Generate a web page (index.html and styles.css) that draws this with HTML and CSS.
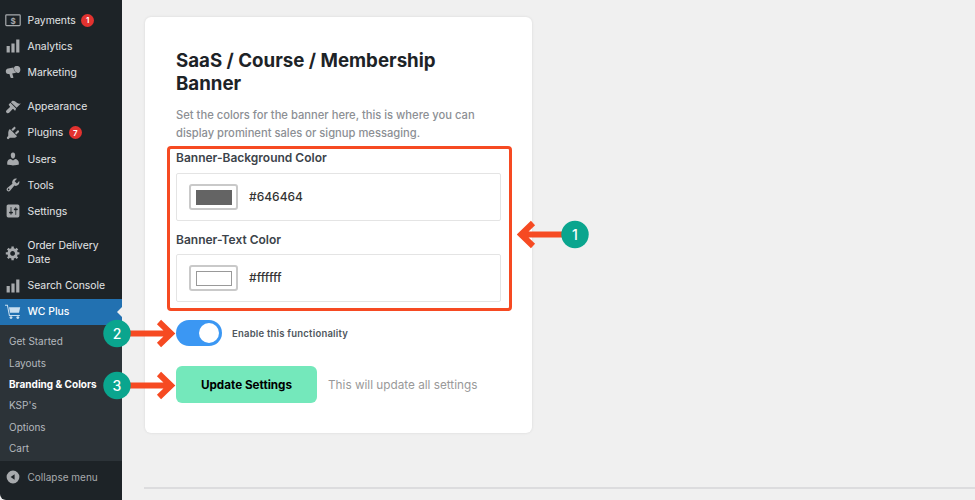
FILE: index.html
```html
<!DOCTYPE html>
<html lang="en">
<head>
<meta charset="utf-8">
<title>Branding &amp; Colors</title>
<link rel="stylesheet" href="styles.css">
</head>
<body>
<div class="app">
  <nav class="sidebar">
    <ul class="menu">
      <li class="item"><svg class="icon" viewBox="0 0 20 20"><rect x="1" y="3.500" width="18" height="13.500" rx="1" class="outline"/><text x="10" y="14.500" class="dollar">$</text></svg><span>Payments</span><b class="badge">1</b></li>
      <li class="item"><svg class="icon" viewBox="0 0 20 20"><path d="M18 18V2h-4v16h4zm-6 0V7H8v11h4zm-6 0v-8H2v8h4z"/></svg><span>Analytics</span></li>
      <li class="item"><svg class="icon" viewBox="0 0 20 20"><path d="M17.500 3c1 .7 1.700 2.300 1.700 4.200S18.300 10.800 17 11.200c-1 .3-2-.1-3-.9-1.300-1-2.300-2.600-2.600-4.200-.3-1.500.1-2.800 1.300-3.300 1-.5 3.300-.5 4.800.2zM10.500 4.500c.2 2.500 1.600 5 3.500 6.400l-5 1 1.500 4.800c.1.500-.2.800-.6.800H7.700c-.4 0-.7-.2-.8-.6L5.500 12.500H4C2 12.500 1 11 1 9s1-3.200 3-3.500z"/></svg><span>Marketing</span></li>
      <li class="item group"><svg class="icon" viewBox="0 0 20 20"><path d="M14.480 11.060L7.410 3.990l1.500-1.500c.5-.56 2.300-.47 3.510.32 1.210.8 1.430 1.280 2.910 2.100 1.180.64 2.450 1.260 4.450.85zm-.71.71L6.700 4.700 4.930 6.470c-.39.39-.39 1.020 0 1.410l1.060 1.060c.39.39.39 1.030 0 1.420L2 14c-1.500 1.500-.5 3 .5 3.500s2.200.2 3-.6l3.800-4c.39-.39 1.020-.39 1.410 0l1.060 1.060c.39.39 1.020.39 1.410 0z"/></svg><span>Appearance</span></li>
      <li class="item"><svg class="icon" viewBox="0 0 20 20"><path d="M13.110 4.360L9.870 7.600 8 5.730l3.240-3.240c.35-.34 1.050-.2 1.560.32.520.51.660 1.210.310 1.550zm-8 1.770l.91-1.120 9.010 9.010-1.190.84c-.71.71-2.630 1.160-3.820 1.160H6.140L4.900 17.260c-.59.59-1.540.59-2.120 0-.59-.58-.59-1.530 0-2.120l1.240-1.240v-3.880c0-1.130.4-3.190 1.090-3.890zm7.260 3.970l3.240-3.240c.34-.35 1.040-.21 1.550.31.520.51.660 1.210.310 1.550l-3.240 3.250z"/></svg><span>Plugins</span><b class="badge">7</b></li>
      <li class="item"><svg class="icon" viewBox="0 0 20 20"><path d="M10 9.250c-2.270 0-2.730-3.440-2.730-3.440C7 4.020 7.820 2 9.970 2c2.160 0 2.980 2.020 2.710 3.810 0 0-.41 3.440-2.680 3.440zm0 2.570L12.720 10c2.390 0 4.520 2.330 4.520 4.530v2.490s-3.650 1.130-7.240 1.130c-3.650 0-7.240-1.130-7.240-1.130v-2.490c0-2.250 1.940-4.480 4.470-4.480z"/></svg><span>Users</span></li>
      <li class="item"><svg class="icon" viewBox="0 0 20 20"><path d="M16.680 9.770c-1.340 1.340-3.300 1.670-4.950.99l-5.410 6.520c-.99.99-2.590.99-3.580 0s-.99-2.590 0-3.570l6.520-5.420c-.68-1.650-.35-3.610.99-4.950 1.280-1.280 3.120-1.620 4.720-1.060l-2.890 2.890 2.820 2.820 2.860-2.870c.53 1.580.18 3.390-1.080 4.650zM3.810 16.210c.4.39 1.040.39 1.430 0 .4-.4.4-1.040 0-1.430-.39-.4-1.030-.4-1.430 0-.39.39-.39 1.030 0 1.430z"/></svg><span>Tools</span></li>
      <li class="item"><svg class="icon" viewBox="0 0 20 20"><path d="M18 16V4c0-1.100-.9-2-2-2H4c-1.100 0-2 .9-2 2v12c0 1.100.9 2 2 2h12c1.100 0 2-.9 2-2zM8 11h1c.55 0 1 .45 1 1s-.45 1-1 1H8v1.500c0 .28-.22.5-.5.5s-.5-.22-.5-.5V13H6c-.55 0-1-.45-1-1s.45-1 1-1h1V5.500c0-.28.22-.5.5-.5s.5.22.5.5V11zm5-2h-1c-.55 0-1-.45-1-1s.45-1 1-1h1V5.500c0-.28.22-.5.5-.5s.5.22.5.5V7h1c.55 0 1 .45 1 1s-.45 1-1 1h-1v5.500c0 .28-.22.5-.5.5s-.5-.22-.5-.5V9z"/></svg><span>Settings</span></li>
      <li class="item group tall"><svg class="icon" viewBox="0 0 20 20"><path d="M18 12h-2.180c-.17.7-.44 1.350-.81 1.930l1.540 1.540-2.100 2.100-1.540-1.540c-.58.36-1.230.63-1.910.79V19H8v-2.180c-.68-.16-1.330-.43-1.910-.79l-1.540 1.540-2.120-2.120 1.540-1.540c-.36-.58-.63-1.230-.79-1.910H1V9.030h2.170c.16-.7.44-1.350.8-1.940L2.430 5.550l2.100-2.100 1.540 1.540c.58-.37 1.240-.64 1.930-.81V2h3v2.180c.68.16 1.330.43 1.910.79l1.540-1.540 2.120 2.120-1.540 1.540c.36.59.64 1.240.8 1.940H18V12zm-8.500 1.500c1.660 0 3-1.340 3-3s-1.340-3-3-3-3 1.340-3 3 1.340 3 3 3z"/></svg><span>Order Delivery Date</span></li>
      <li class="item"><svg class="icon" viewBox="0 0 20 20"><path d="M18 18V2h-4v16h4zm-6 0V7H8v11h4zm-6 0v-8H2v8h4z"/></svg><span>Search Console</span></li>
      <li class="item active"><svg class="icon cart" viewBox="0 0 20 20"><path d="M0 1.500h3l2.500 13h13" class="line"/><path d="M5 4h14l-1.500 7H6.300z"/><circle cx="7.500" cy="17" r="1.800"/><circle cx="16" cy="17" r="1.800"/></svg><span>WC Plus</span></li>
    </ul>
    <ul class="submenu">
      <li>Get Started</li>
      <li>Layouts</li>
      <li class="current">Branding &amp; Colors</li>
      <li>KSP's</li>
      <li>Options</li>
      <li>Cart</li>
    </ul>
    <div class="collapse"><svg class="icon" viewBox="0 0 20 20"><path d="M10 2a8 8 0 1 1 0 16 8 8 0 0 1 0-16zm2 4.500L7 10l5 3.500z"/></svg><span>Collapse menu</span></div>
  </nav>
  <main class="main">
    <section class="card">
      <h1 class="title">SaaS / Course / Membership Banner</h1>
      <p class="desc">Set the colors for the banner here, this is where you can display prominent sales or signup messaging.</p>
      <div class="fields">
        <label class="label">Banner-Background Color</label>
        <div class="field">
          <span class="swatch"><i class="chip chip-dark"></i></span>
          <span class="value">#646464</span>
        </div>
        <label class="label second">Banner-Text Color</label>
        <div class="field field-second">
          <span class="swatch"><i class="chip chip-light"></i></span>
          <span class="value">#ffffff</span>
        </div>
      </div>
      <div class="toggle-row">
        <span class="toggle"><i class="knob"></i></span>
        <span class="toggle-label">Enable this functionality</span>
      </div>
      <div class="action-row">
        <button class="btn" type="button">Update Settings</button>
        <span class="hint">This will update all settings</span>
      </div>
    </section>
    <hr class="rule">
  </main>
</div>

<div class="redbox"></div>
<svg class="arrow arrow-1" viewBox="0 0 75 40"><path d="M6 17.500H58M16 6L4 17.500 16 29" class="arrow-stroke"/><circle cx="58" cy="17.500" r="13.700" class="dot"/><text x="58" y="22.500" class="num">1</text></svg>
<svg class="arrow arrow-2" viewBox="0 0 75 40"><path d="M14 17.500h52M56 6l12 11.500L56 29" class="arrow-stroke"/><circle cx="14" cy="17.500" r="13.700" class="dot"/><text x="14" y="22.500" class="num">2</text></svg>
<svg class="arrow arrow-3" viewBox="0 0 75 40"><path d="M14 17.500h52M56 6l12 11.500L56 29" class="arrow-stroke"/><circle cx="14" cy="17.500" r="13.700" class="dot"/><text x="14" y="22.500" class="num">3</text></svg>
</body>
</html>
```
FILE: styles.css
```css
* { box-sizing: border-box; }
html, body { margin: 0; height: 100%; overflow: hidden; }
body { background: #f0f0f0; font-family: Inter, "Liberation Sans", sans-serif; position: relative; }
ul { list-style: none; margin: 0; padding: 0; }

.app { display: flex; height: 500px; }

/* Sidebar */
.sidebar { width: 122px; flex: none; background: #1d2327; display: flex; flex-direction: column; padding-top: 7px; color: #e4e6e8; font-size: 10.400px; border-bottom-left-radius: 6px; }
.menu { display: flex; flex-direction: column; }
.item { display: flex; align-items: center; height: 26.200px; padding-left: 5px; gap: 6.500px; position: relative; }
.item.group { margin-top: 8px; }
.item.tall { height: 40px; line-height: 14px; }
.item.tall span { width: 85px; }
.item .badge { margin-left: -1px; }
.icon { width: 16px; height: 16px; fill: #a7aaad; flex: none; }
.outline { fill: none; stroke: #a7aaad; stroke-width: 1.500; }
.dollar { font-size: 10px; font-weight: 700; fill: #a7aaad; text-anchor: middle; }
.badge { width: 13px; height: 13px; border-radius: 50%; background: #e2322f; color: #fff; font-size: 8px; font-weight: 600; display: flex; align-items: center; justify-content: center; }
.item.active { background: #2271b1; color: #fff; font-weight: 500; }
.item.active::after { content: ""; position: absolute; right: 0; top: 50%; margin-top: -5px; border: 5px solid transparent; border-right-color: #f0f0f0; border-left: 0; }
.cart { fill: #c9dff0; }
.line { fill: none; stroke: #c9dff0; stroke-width: 1.300; }
.submenu { background: #2c3338; height: 136px; padding-top: 5.500px; font-size: 10px; color: #b4b9be; }
.submenu li { height: 21.450px; display: flex; align-items: center; padding-left: 9px; }
.submenu .current { color: #fff; font-weight: 700; }
.collapse { flex: 1; display: flex; align-items: center; gap: 6.500px; padding-left: 5px; color: #a7aaad; font-size: 10px; padding-bottom: 6px; }

/* Main */
.main { flex: 1; padding: 17px 0 0 23px; display: flex; flex-direction: column; }
.card { width: 387px; height: 416px; background: #fff; border-radius: 6px; box-shadow: 0 0 3px rgba(0,0,0,.1); padding: 32px 31px 0; }
.title { margin: 0; font-size: 18.700px; line-height: 23px; font-weight: 700; color: #1d2327; }
.desc { margin: 11px 0 0; font-size: 11.200px; line-height: 18px; color: #8c8f94; font-weight: 500; }
.fields { margin-top: 8px; }
.label { display: block; font-size: 12px; font-weight: 600; color: #3c434a; line-height: 16px; }
.label.second { margin-top: 11px; }
.field { height: 48px; margin-top: 7px; border: 1px solid #e4e4e4; border-radius: 2px; display: flex; align-items: center; padding-left: 12px; gap: 11px; }
.field.field-second { margin-top: 6px; }
.swatch { width: 49px; height: 26px; border: 2px solid #c9c9c9; border-radius: 3px; display: flex; align-items: center; justify-content: center; background: #fff; }
.chip { width: 36px; height: 15px; display: block; }
.chip-dark { background: #646464; }
.chip-light { background: #fff; border: 1px solid #999; }
.value { font-size: 12px; line-height: 14px; font-weight: 500; color: #333; margin-top: -1px; }
.toggle-row { display: flex; align-items: center; gap: 10px; margin-top: 18px; }
.toggle { width: 46px; height: 26px; background: #3b97f3; border-radius: 13px; display: flex; align-items: center; justify-content: flex-end; padding-right: 3px; }
.knob { width: 20px; height: 20px; border-radius: 50%; background: #fff; display: block; }
.toggle-label { font-size: 9.500px; font-weight: 600; color: #50575e; letter-spacing: .22px; }
.action-row { display: flex; align-items: center; gap: 11px; margin-top: 20px; }
.btn { width: 141px; height: 37px; border: 0; border-radius: 6px; background: #74e8bb; color: #000; font: 700 11.700px Inter, "Liberation Sans", sans-serif; }
.hint { font-size: 11.750px; color: #999; }
.rule { border: 0; height: 2px; background: #dcdcde; margin: 54px -1px 0 -1px; }

/* Annotations over the page */
.redbox { position: absolute; left: 167px; top: 146px; width: 345px; height: 165px; border: 3px solid #f64a22; border-radius: 4px; }
.arrow { position: absolute; width: 75px; height: 40px; }
.arrow-1 { left: 517px; top: 216.500px; }
.arrow-2 { left: 103px; top: 315.500px; }
.arrow-3 { left: 103px; top: 367.500px; }
.arrow-stroke { fill: none; stroke: #f64a22; stroke-width: 6; }
.dot { fill: #0aa58e; }
.num { font-size: 14px; fill: #fff; text-anchor: middle; font-family: Inter, sans-serif; font-weight: 500; }
```
